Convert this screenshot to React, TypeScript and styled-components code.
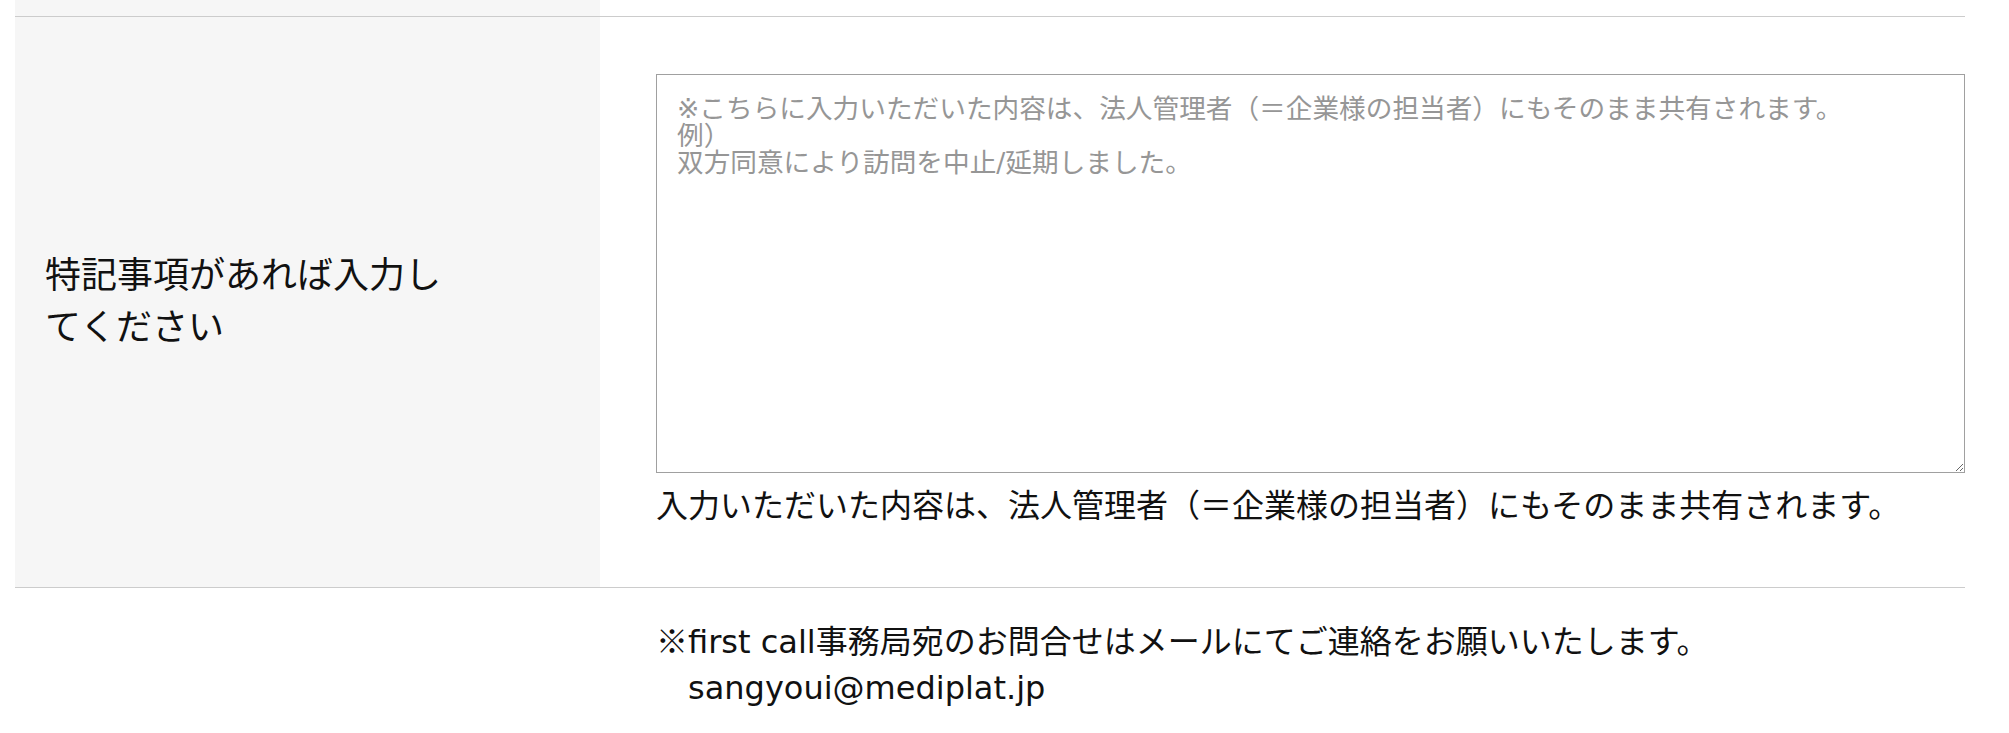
import styled, { createGlobalStyle } from 'styled-components';

const GlobalStyle = createGlobalStyle`
    html, body {
        margin: 0;
        padding: 0;
        background: #fff;
    }
    body {
        font-family: "DejaVu Sans", "Noto Sans CJK JP", sans-serif;
        color: #111;
    }
`;

const PLACEHOLDER =
    '※こちらに入力いただいた内容は、法人管理者（＝企業様の担当者）にもそのまま共有されます。\n例）\n双方同意により訪問を中止/延期しました。';

export default function App() {
    return (
        <>
            <GlobalStyle />
            <Page>
                <FormTable>
                    <Row $border>
                        <LabelCell />
                        <StubCell />
                    </Row>
                    <Row $border>
                        <LabelCell>
                            <Label>特記事項があれば入力してください</Label>
                        </LabelCell>
                        <FieldCell>
                            <Note placeholder={PLACEHOLDER} />
                            <Hint>入力いただいた内容は、法人管理者（＝企業様の担当者）にもそのまま共有されます。</Hint>
                        </FieldCell>
                    </Row>
                    <Row>
                        <BlankCell />
                        <ContactCell>
                            <ContactLine>
                                <Mark>※</Mark>first call事務局宛のお問合せはメールにてご連絡をお願いいたします。
                            </ContactLine>
                            <ContactLine>　sangyoui@mediplat.jp</ContactLine>
                        </ContactCell>
                    </Row>
                </FormTable>
            </Page>
        </>
    );
}

const Page = styled.div`
    padding: 0 44px 0 15px;
`;

const FormTable = styled.div`
    width: 1950px;
    display: flex;
    flex-direction: column;
`;

const Row = styled.div<{ $border?: boolean }>`
    display: grid;
    grid-template-columns: 585px 1fr;
    border-bottom: ${(p) => (p.$border ? '1px solid #cccccc' : 'none')};
`;

const LabelCell = styled.div`
    background: #f6f6f6;
    display: flex;
    align-items: center;
    padding-left: 30px;
    min-height: 16px;
`;

const StubCell = styled.div`
    height: 16px;
`;

const BlankCell = styled.div``;

const Label = styled.div`
    width: 410px;
    font-size: 36px;
    line-height: 52px;
    color: #111;
`;

const FieldCell = styled.div`
    padding: 57px 0 57px 56px;
    display: flex;
    flex-direction: column;
`;

const Note = styled.textarea`
    display: block;
    box-sizing: border-box;
    width: 100%;
    height: 399px;
    margin: 0;
    padding: 20px;
    border: 1px solid #a0a0a0;
    border-radius: 0;
    font-family: "DejaVu Sans", "Noto Sans CJK JP", sans-serif;
    font-size: 26.67px;
    line-height: 27px;
    color: #111;
    background: #fff;

    &::placeholder {
        color: #969696;
    }
`;

const Hint = styled.p`
    margin: 9px 0 0;
    font-size: 32px;
    line-height: 48px;
    color: #111;
`;

const ContactCell = styled.div`
    padding: 28px 0 24px 56px;
`;

const ContactLine = styled.div`
    font-size: 32px;
    line-height: 46px;
    color: #111;
    white-space: pre;
`;

const Mark = styled.span`
    font-family: "Noto Sans CJK JP", sans-serif;
`;
